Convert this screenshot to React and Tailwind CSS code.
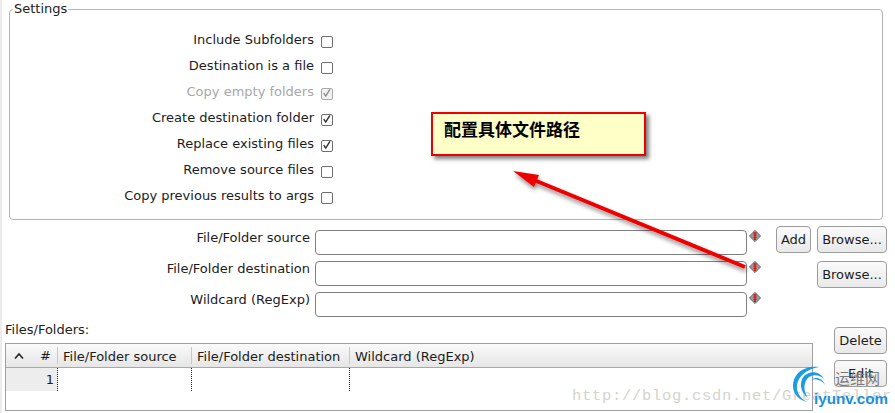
const font = { fontFamily: '"DejaVu Sans", sans-serif' };

function Check({ on, dim }) {
  return (
    <span className={`relative block w-[12px] h-[12px] rounded-[2px] border ${dim ? 'border-[#aaaaaa] bg-[#f2f2f2]' : 'border-[#6e6e6e] bg-white'}`}>
      {on && (
        <svg viewBox="0 0 12 12" className="absolute left-0 top-0 w-[10px] h-[10px]">
          <path d="M2 5 L4.5 8.5 L9.5 0.5" fill="none" stroke={dim ? '#8c8c8c' : '#2e2e2e'} strokeWidth="1.7" />
        </svg>
      )}
    </span>
  );
}

function Row({ label, on, dim }) {
  return (
    <div className="flex items-center justify-end h-[26px] w-[323px]">
      <span className={`leading-[20px] -mt-[1px] whitespace-nowrap ${dim ? 'text-[#a8a8a8]' : 'text-[#1c1c1c]'}`}>{label}</span>
      <span className="ml-[7px] mt-[4px]"><Check on={on} dim={dim} /></span>
    </div>
  );
}

function Diamond() {
  return (
    <svg viewBox="0 0 14 14" className="w-[12px] h-[12px] shrink-0">
      <path d="M7 0.5 L13.5 7 L7 13.5 L0.5 7 Z" fill="#9a9a9a" stroke="#555555" strokeWidth="1" />
      <path d="M5.2 3.4 H8.8 M7 3 V11 M5.2 6 H8.8 M5.2 8.5 H8.8 M5.8 11 H8.2" stroke="#e01010" strokeWidth="1.4" fill="none" />
    </svg>
  );
}

function Btn({ children, w }) {
  return (
    <button className={`block h-[27px] ${w} rounded-[4px] border border-[#9c9c9c] bg-gradient-to-b from-[#fafafa] to-[#e9e9e9] text-[#1c1c1c] text-center leading-[24px] p-0`}>
      {children}
    </button>
  );
}

function Field({ label, children }) {
  return (
    <div className="flex items-start h-[31px]">
      <span className="w-[308px] text-right leading-[20px] -mt-[2px] mb-[2px] text-[#1c1c1c] whitespace-nowrap">{label}</span>
      <span className="ml-[5px] w-[432px] h-[25px] rounded-[4px] border border-[#7f7f7f] bg-white shrink-0" />
      <span className="ml-[2px]"><Diamond /></span>
      {children}
    </div>
  );
}

export default function App() {
  return (
    <div style={font} className="relative w-[895px] h-[413px] overflow-hidden bg-white text-[13px] border-l-2 border-[#ececec]">
      {/* watermark sits under the form */}
      <div className="absolute left-[570px] top-[386px] text-[15.5px] leading-[20px] tracking-[0.7px] text-[#d4d4cc] whitespace-nowrap" style={{ fontFamily: '"Liberation Mono", monospace' }}>
        http://blog.csdn.net/GreatTeller
      </div>

      <fieldset className="ml-[7px] mt-[3px] w-[874px] h-[217px] border border-[#b4b4b4] rounded-[4px] pt-[14px] m-0">
        <legend className="relative ml-[3px] px-[1px] text-[#1c1c1c] leading-[12px] -mb-[2px]">Settings</legend>
        <div className="flex flex-col">
          <Row label="Include Subfolders" />
          <Row label="Destination is a file" />
          <Row label="Copy empty folders" on dim />
          <Row label="Create destination folder" on />
          <Row label="Replace existing files" on />
          <Row label="Remove source files" />
          <Row label="Copy previous results to args" />
        </div>
      </fieldset>

      <div className="mt-[10px] flex flex-col">
        <Field label="File/Folder source">
          <span className="ml-[15px] -mt-[4px]"><Btn w="w-[35px]">Add</Btn></span>
          <span className="ml-[6px] -mt-[4px]"><Btn w="w-[70px]">Browse...</Btn></span>
        </Field>
        <Field label="File/Folder destination">
          <span className="ml-[56px]"><Btn w="w-[70px]">Browse...</Btn></span>
        </Field>
        <Field label="Wildcard (RegExp)" />
      </div>

      <div className="flex -mt-[2px]">
        <div className="ml-[3px] w-[808px]">
          <div className="leading-[20px] -mt-[1px] mb-[3px] text-[#1c1c1c]">Files/Folders:</div>
          <div className="w-[808px] h-[68px] border border-[#a0a0a0]">
            <div className="flex h-[24px] border-b border-[#a8a8a8] bg-gradient-to-b from-[#fafafa] to-[#e6e6e6] text-[#1c1c1c]">
              <div className="w-[52px] flex items-center justify-between pl-[8px] pr-[6px] border-r border-[#c8c8c8] my-[3px]">
                <svg viewBox="0 0 10 8" className="w-[10px] h-[8px]"><path d="M1 6.5 L5 2 L9 6.5" fill="none" stroke="#222222" strokeWidth="1.6" /></svg>
                <span>#</span>
              </div>
              <div className="w-[134px] pl-[5px] border-r border-[#c8c8c8] my-[3px] leading-[20px] whitespace-nowrap">File/Folder source</div>
              <div className="w-[158px] pl-[5px] border-r border-[#c8c8c8] my-[3px] leading-[20px] whitespace-nowrap">File/Folder destination</div>
              <div className="flex-1 pl-[5px] my-[3px] leading-[20px] whitespace-nowrap">Wildcard (RegExp)</div>
            </div>
            <div className="flex h-[23px]">
              <div className="w-[52px] bg-[#ededed] text-right pr-[3px] border-r border-dotted border-[#222222] leading-[23px] text-[#1c1c1c]">1</div>
              <div className="w-[134px] border-r border-dotted border-[#222222]" />
              <div className="w-[158px] border-r border-dotted border-[#222222]" />
            </div>
          </div>
        </div>
        <div className="ml-[21px] mt-[6px] flex flex-col gap-[6px]">
          <Btn w="w-[53px]">Delete</Btn>
          <Btn w="w-[53px]">Edit</Btn>
        </div>
      </div>

      {/* callout */}
      <div className="absolute left-[429px] top-[112px] w-[215px] h-[44px] bg-[#ffffc8] border-2 border-[#ee0000] shadow-[3px_3px_4px_rgba(0,0,0,0.5)] pl-[11px] pt-[3px] text-[17px] font-bold leading-[24px] text-black whitespace-nowrap" style={{ fontFamily: '"Noto Sans CJK SC", sans-serif' }}>
        配置具体文件路径
      </div>

      {/* arrow */}
      <svg className="absolute left-0 top-0 pointer-events-none" width="895" height="413" viewBox="0 0 895 413">
        <defs>
          <filter id="s" x="-10%" y="-20%" width="130%" height="150%">
            <feDropShadow dx="1" dy="3" stdDeviation="2" floodColor="#000000" floodOpacity="0.45" />
          </filter>
        </defs>
        <g filter="url(#s)" transform="translate(-2 0)">
          <path d="M745 267 L534 180" stroke="#ee0000" strokeWidth="4" fill="none" />
          <path d="M513 171 L539 175 L534 187 Z" fill="#ee0000" />
        </g>
      </svg>

      {/* logo */}
      <svg className="absolute left-[789px] top-[365px]" width="40" height="42" viewBox="0 0 40 42">
        <path d="M28 2 C14 0 2 8 2 21 C2 29 8 35 16 37 C9 33 5 27 6 20 C7 11 16 4 28 2 Z" fill="#1b9ce0" />
        <path d="M33 14 C29 6 19 5 13 11 C8 17 9 27 17 33 C13 27 12 20 16 14 C20 9 28 9 33 14 Z" fill="#1b9ce0" />
        <path d="M34 20 C32 13 24 11 20 15 C25 13 31 15 34 20 Z" fill="#1b9ce0" />
      </svg>
      <div className="absolute left-[812px] top-[390px] text-[15.2px] leading-[18px] font-bold text-[#1c8fdc] whitespace-nowrap" style={{ fontFamily: '"Liberation Sans", sans-serif' }}>iyunv.com</div>
      <div className="absolute left-[833px] top-[368px] text-[15px] leading-[20px] text-[#7c7c7c] whitespace-nowrap" style={{ fontFamily: '"Noto Sans CJK SC", sans-serif' }}>运维网</div>
    </div>
  );
}
